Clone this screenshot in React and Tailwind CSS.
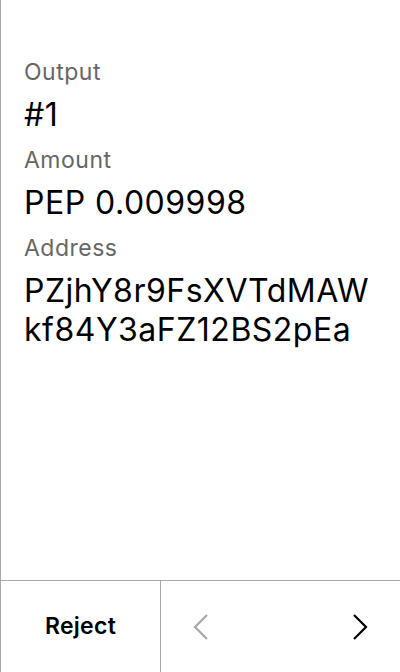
import React from 'react';

const Field = ({ label, lines }) => (
  <div className="flex flex-col">
    <span className="text-[23px] leading-[28px] tracking-[0.5px] text-[#666666]">{label}</span>
    <div className="mt-[9px] mb-[12px] text-[32px] leading-[39px] tracking-[0.5px] text-black">
      {lines.map((l) => (
        <div key={l}>{l}</div>
      ))}
    </div>
  </div>
);

const App = () => {
  return (
    <div className="h-[672px] w-[400px] flex flex-col bg-white border-l border-[#a8a8a8]" style={{ fontFamily: 'Inter, "Noto Sans", sans-serif' }}>
      <div className="flex-1 pt-[58px] pl-[23px] pr-4">
        <Field label="Output" lines={['#1']} />
        <Field label="Amount" lines={['PEP 0.009998']} />
        <Field label="Address" lines={['PZjhY8r9FsXVTdMAW', 'kf84Y3aFZ12BS2pEa']} />
      </div>
      <div className="h-[92px] flex border-t border-[#a8a8a8]">
        <button className="w-[160px] border-r border-[#a8a8a8] text-[23px] font-semibold tracking-[0.3px] text-black">
          Reject
        </button>
        <div className="flex-1 flex justify-between">
          <button className="w-[80px] flex items-center justify-center text-[#a8a8a8]">
            <svg width="16" height="26" viewBox="0 0 16 26" fill="none" stroke="currentColor" strokeWidth="2.2">
              <path d="M14 1 L2 13 L14 25" />
            </svg>
          </button>
          <button className="w-[80px] flex items-center justify-center text-black">
            <svg width="16" height="26" viewBox="0 0 16 26" fill="none" stroke="currentColor" strokeWidth="2.2">
              <path d="M2 1 L14 13 L2 25" />
            </svg>
          </button>
        </div>
      </div>
    </div>
  );
};

export default App;
